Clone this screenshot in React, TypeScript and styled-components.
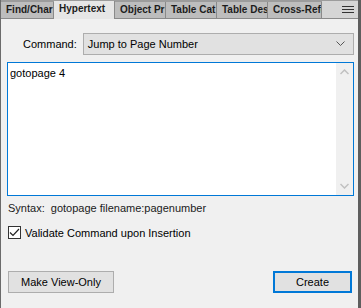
import styled, { createGlobalStyle } from "styled-components";

const GlobalStyle = createGlobalStyle`
  html, body {
    margin: 0;
    padding: 0;
    background: #f0f0f0;
  }
  * {
    box-sizing: border-box;
  }
`;

// labels as the narrow tabs show them
const tabs = [
  { label: "Find/Char", width: 53 },
  { label: "Hypertext", width: 61 },
  { label: "Object Pr", width: 51 },
  { label: "Table Cat", width: 51 },
  { label: "Table Des", width: 51 },
  { label: "Cross-Refe", width: 54 },
];

const App: React.FC = () => {
  return (
    <>
      <GlobalStyle />
      <Panel>
        <TabStrip>
          {tabs.map((t) => (
            <Tab key={t.label} $active={t.label === "Hypertext"} $width={t.width}>
              {t.label}
            </Tab>
          ))}
          <TabFiller>
            <svg width="12" height="8" viewBox="0 0 12 8">
              <g stroke="#333" strokeWidth="1">
                <line x1="0" y1="0.5" x2="12" y2="0.5" />
                <line x1="0" y1="3.5" x2="12" y2="3.5" />
                <line x1="0" y1="6.5" x2="12" y2="6.5" />
              </g>
            </svg>
          </TabFiller>
        </TabStrip>
        <Body>
          <CommandRow>
            <Label>Command:</Label>
            <Select>
              <span>Jump to Page Number</span>
              <svg width="9" height="6" viewBox="0 0 9 6">
                <path d="M0.5 0.5 L4.5 4.5 L8.5 0.5" fill="none" stroke="#555" strokeWidth="1" />
              </svg>
            </Select>
          </CommandRow>
          <TextBox>
            <TextContent>gotopage 4</TextContent>
            <ScrollBar>
              <svg width="9" height="6" viewBox="0 0 9 6">
                <path d="M0.5 5 L4.5 1 L8.5 5" fill="none" stroke="#c0c0c0" strokeWidth="1.5" />
              </svg>
              <svg width="9" height="6" viewBox="0 0 9 6">
                <path d="M0.5 1 L4.5 5 L8.5 1" fill="none" stroke="#c0c0c0" strokeWidth="1.5" />
              </svg>
            </ScrollBar>
          </TextBox>
          <Syntax>
            Syntax:&nbsp;&nbsp;gotopage filename:pagenumber
          </Syntax>
          <CheckRow>
            <CheckBox>
              <svg width="11" height="9" viewBox="0 0 11 9">
                <path d="M1 4.5 L4 7.5 L10 1" fill="none" stroke="#222" strokeWidth="1.2" />
              </svg>
            </CheckBox>
            <span>Validate Command upon Insertion</span>
          </CheckRow>
          <ButtonRow>
            <Button $width={106}>Make View-Only</Button>
            <Button $width={79} $default>
              Create
            </Button>
          </ButtonRow>
        </Body>
      </Panel>
    </>
  );
};

export default App;

const Panel = styled.div`
  width: 361px;
  height: 308px;
  display: flex;
  flex-direction: column;
  border-left: 1px solid #6b6b6b;
  border-right: 3px solid #5e5e5e;
  background: #f0f0f0;
  font-family: "Segoe UI", "Liberation Sans", Arial, sans-serif;
  font-size: 11px;
  color: #000;
  overflow: hidden;
`;

const TabStrip = styled.div`
  height: 19px;
  display: flex;
  align-items: flex-end;
  background: #9c9c9c;
  padding-top: 1px;
`;

const Tab = styled.div<{ $active?: boolean; $width: number }>`
  width: ${(p) => p.$width}px;
  height: ${(p) => (p.$active ? 18 : 17)}px;
  flex: none;
  overflow: hidden;
  white-space: nowrap;
  padding-left: 5px;
  font-size: 10px;
  font-weight: bold;
  line-height: 16px;
  color: #1c1c1c;
  background: ${(p) => (p.$active ? "#e6e6e6" : "#bdbdbd")};
  border-right: 1px solid #8a8a8a;
  border-bottom: ${(p) => (p.$active ? "none" : "1px solid #8a8a8a")};
`;

const TabFiller = styled.div`
  flex: 1;
  height: 18px;
  background: #d5d5d5;
  border-bottom: 1px solid #8a8a8a;
  display: flex;
  align-items: center;
  justify-content: flex-end;
  padding-right: 4px;
`;

const Body = styled.div`
  flex: 1;
  display: flex;
  flex-direction: column;
  padding: 14px 4px 0 6px;
`;

const CommandRow = styled.div`
  display: flex;
  align-items: center;
  gap: 6px;
  padding-left: 16px;
`;

const Label = styled.span`
  color: #000;
`;

const Select = styled.div`
  flex: 1;
  height: 22px;
  display: flex;
  align-items: center;
  justify-content: space-between;
  padding: 0 8px 0 4px;
  background: #e1e1e1;
  border: 1px solid #adadad;
`;

const TextBox = styled.div`
  margin-top: 7px;
  height: 134px;
  display: flex;
  border: 1px solid #0078d7;
  background: #fff;
`;

const TextContent = styled.div`
  flex: 1;
  padding: 2px 2px;
  line-height: 16px;
`;

const ScrollBar = styled.div`
  width: 17px;
  display: flex;
  flex-direction: column;
  justify-content: space-between;
  align-items: center;
  padding: 6px 0;
  background: #f0f0f0;
`;

const Syntax = styled.div`
  margin-top: 6px;
  padding-left: 1px;
  color: #1a1a1a;
`;

const CheckRow = styled.div`
  margin-top: 12px;
  display: flex;
  align-items: center;
  gap: 4px;
  padding-left: 1px;
`;

const CheckBox = styled.div`
  width: 13px;
  height: 13px;
  border: 1px solid #333;
  background: #fff;
  display: flex;
  align-items: center;
  justify-content: center;
`;

const ButtonRow = styled.div`
  margin-top: 32px;
  display: flex;
  justify-content: space-between;
  padding: 0 2px 0 1px;
`;

const Button = styled.div<{ $width: number; $default?: boolean }>`
  width: ${(p) => p.$width}px;
  height: 22px;
  display: flex;
  align-items: center;
  justify-content: center;
  background: #e1e1e1;
  border: ${(p) => (p.$default ? "2px solid #0078d7" : "1px solid #adadad")};
`;
